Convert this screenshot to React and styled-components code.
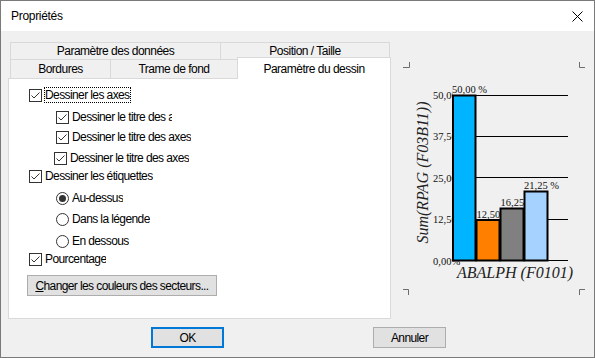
import React from 'react';
import styled, { createGlobalStyle } from 'styled-components';

const GlobalStyle = createGlobalStyle`
  html, body { margin: 0; padding: 0; background: #fff; }
  body { font-family: "Liberation Sans", Arial, sans-serif; color: #000; }
`;

const Window = styled.div`
  width: 595px;
  height: 358px;
  box-sizing: border-box;
  border: 1px solid #7a7a7a;
  background: #f0f0f0;
  display: flex;
  flex-direction: column;
  overflow: hidden;
`;

const TitleBar = styled.div`
  height: 30px;
  flex: none;
  background: #fff;
  display: flex;
  align-items: center;
  justify-content: space-between;
  padding: 0 11px 0 10px;
  font-size: 12px;
  letter-spacing: -0.3px;
`;

const Body = styled.div`
  flex: 1;
  display: flex;
  flex-direction: column;
  padding: 11px 0 0 7px;
`;

const Main = styled.div`
  display: flex;
  align-items: flex-start;
`;

const TabControl = styled.div`
  width: 383px;
  display: flex;
  flex-direction: column;
`;

const TabRow = styled.div`
  display: flex;
  align-items: flex-end;
  padding-left: 2px;
  height: ${p => p.$h}px;
`;

const Tab = styled.div`
  box-sizing: border-box;
  width: ${p => p.$w}px;
  height: ${p => (p.$active ? p.$h + 3 : p.$h)}px;
  margin-top: ${p => (p.$active ? -2 : 0)}px;
  margin-bottom: ${p => (p.$active ? -1 : 0)}px;
  position: ${p => (p.$active ? 'relative' : 'static')};
  z-index: ${p => (p.$active ? 1 : 'auto')};
  background: ${p => (p.$active ? '#fff' : '#f0f0f0')};
  border-top: 1px solid #d9d9d9;
  border-left: 1px solid #d9d9d9;
  border-right: ${p => (p.$last ? '1px solid #d9d9d9' : 'none')};
  display: flex;
  align-items: center;
  justify-content: center;
  font-size: 12px;
  letter-spacing: -0.5px;
  white-space: nowrap;
`;

const Panel = styled.div`
  box-sizing: border-box;
  height: 241px;
  background: #fff;
  border: 1px solid #d9d9d9;
  padding: 0 0 0 20px;
  display: flex;
  flex-direction: column;
`;

const Row = styled.div`
  height: 16px;
  margin-top: ${p => p.$gap}px;
  margin-left: ${p => p.$indent || 0}px;
  display: flex;
  align-items: center;
`;

const Box = styled.span`
  box-sizing: border-box;
  width: 13px;
  height: 13px;
  flex: none;
  border: 1px solid #333;
  background: #fff;
  display: flex;
  align-items: center;
  justify-content: center;
`;

const RadioBox = styled(Box)`
  border-radius: 50%;
  &::after {
    content: '';
    display: ${p => (p.$on ? 'block' : 'none')};
    width: 7px;
    height: 7px;
    border-radius: 50%;
    background: #333;
  }
`;

const Label = styled.span`
  margin-left: ${p => (p.$focus ? 2 : 3)}px;
  font-size: 12px;
  letter-spacing: -0.6px;
  white-space: nowrap;
  overflow: hidden;
  line-height: 14px;
  box-sizing: border-box;
  border: ${p => (p.$focus ? '1px dotted #000' : 'none')};
  ${p => p.$clip && `width: ${p.$clip}px;`}
`;

const PushButton = styled.button`
  box-sizing: border-box;
  width: ${p => p.$w}px;
  height: 21px;
  margin-top: ${p => p.$gap || 0}px;
  margin-left: ${p => p.$left || 0}px;
  background: #e1e1e1;
  border: ${p => (p.$default ? '2px solid #0078d7' : '1px solid #adadad')};
  padding: 0;
  font-family: "Liberation Sans", Arial, sans-serif;
  font-size: 12px;
  letter-spacing: -0.6px;
  color: #000;
  display: flex;
  align-items: center;
  justify-content: center;
`;

const Footer = styled.div`
  display: flex;
  margin-top: 8px;
`;

const ChartPane = styled.svg`
  flex: none;
  margin: 14px 0 0 7px;
  width: 192px;
  height: 242px;
`;

function Check() {
  return (
    <svg width="11" height="11" viewBox="0 0 11 11">
      <path d="M1.5 5.5 L4 8 L9.5 2.5" fill="none" stroke="#333" strokeWidth="1" />
    </svg>
  );
}

function CheckRow({ gap, indent, children, focus, clip }) {
  return (
    <Row $gap={gap} $indent={indent}>
      <Box><Check /></Box>
      <Label $focus={focus} $clip={clip}>{children}</Label>
    </Row>
  );
}

function RadioRow({ gap, on, children }) {
  return (
    <Row $gap={gap} $indent={27}>
      <RadioBox $on={on} />
      <Label>{children}</Label>
    </Row>
  );
}

const bars = [
  { x: 453, w: 22.5, top: 95.5, fill: '#00b4ff' },
  { x: 476.5, w: 23, top: 220, fill: '#ff8000' },
  { x: 500.5, w: 23, top: 208.5, fill: '#808080' },
  { x: 524.5, w: 23, top: 191.5, fill: '#a6d2ff' },
];

const ticks = [
  { y: 95.5, t: '50,00%' },
  { y: 136.5, t: '37,50%' },
  { y: 178, t: '25,00%' },
  { y: 219.5, t: '12,50%' },
];

function Chart() {
  const serif = '"Liberation Serif", "Times New Roman", serif';
  return (
    <ChartPane viewBox="398 56 192 242">
      <defs>
        <clipPath id="lab">
          <rect x="398" y="56" width="54.5" height="242" />
        </clipPath>
      </defs>
      <g fill="none" stroke="#6d6d6d" strokeWidth="1">
        <path d="M403 67.5 H409.5 V62" />
        <path d="M579.5 62 V67.5 H585" />
        <path d="M403 289.5 H408.5 V295" />
        <path d="M579.5 295 V289.5 H585" />
      </g>
      <g fontFamily={serif} fontSize="10.5" fill="#111" clipPath="url(#lab)">
        {ticks.map(k => (
          <text key={k.t} x="433" y={k.y + 3.5}>{k.t}</text>
        ))}
      </g>
      <text x="433" y="265" fontFamily={serif} fontSize="10.5" fill="#111">0,00%</text>
      <g stroke="#000" strokeWidth="1">
        {[95.5, 136.5, 177.5, 219.5].map(y => (
          <line key={y} x1="452.5" x2="568" y1={y} y2={y} />
        ))}
        <line x1="452.5" x2="568" y1="260.5" y2="260.5" />
        <line x1="452.5" x2="452.5" y1="95" y2="261" />
      </g>
      {bars.map(b => (
        <rect key={b.x} x={b.x} y={b.top} width={b.w} height={260.5 - b.top}
          fill={b.fill} stroke="#000" strokeWidth="2" />
      ))}
      <g fontFamily={serif} fontSize="10.5" fill="#111">
        <text x="452" y="93">50,00 %</text>
        <text x="476.5" y="217.5">12,50</text>
        <text x="500.5" y="206">16,25</text>
        <text x="524" y="189">21,25 %</text>
      </g>
      <text x="427.5" y="172.5" transform="rotate(-90 427.5 172.5)" textAnchor="middle"
        fontFamily={serif} fontStyle="italic" fontSize="16" fill="#222">Sum(RPAG (F03B11))</text>
      <text x="457" y="278" fontFamily={serif} fontStyle="italic" fontSize="16" fill="#222">ABALPH (F0101)</text>
    </ChartPane>
  );
}

export default function App() {
  return (
    <>
      <GlobalStyle />
      <Window>
        <TitleBar>
          <span>Propriétés</span>
          <svg width="11" height="11" viewBox="0 0 11 11">
            <path d="M0.5 0.5 L10.5 10.5 M10.5 0.5 L0.5 10.5" stroke="#000" strokeWidth="1" />
          </svg>
        </TitleBar>
        <Body>
          <Main>
            <TabControl>
              <TabRow $h={17}>
                <Tab $w={210} $h={17}>Paramètre des données</Tab>
                <Tab $w={170} $h={17} $last>Position / Taille</Tab>
              </TabRow>
              <TabRow $h={19}>
                <Tab $w={100} $h={19}>Bordures</Tab>
                <Tab $w={127} $h={19}>Trame de fond</Tab>
                <Tab $w={154} $h={19} $active $last>Paramètre du dessin</Tab>
              </TabRow>
              <Panel>
                <CheckRow gap={8} focus>Dessiner les axes</CheckRow>
                <CheckRow gap={6} indent={27} clip={100}>Dessiner le titre des axes</CheckRow>
                <CheckRow gap={4} indent={27}>Dessiner le titre des axes</CheckRow>
                <CheckRow gap={5} indent={25}>Dessiner le titre des axes</CheckRow>
                <CheckRow gap={2}>Dessiner les étiquettes</CheckRow>
                <RadioRow gap={6} on>Au-dessus</RadioRow>
                <RadioRow gap={5}>Dans la légende</RadioRow>
                <RadioRow gap={6}>En dessous</RadioRow>
                <CheckRow gap={2}>Pourcentage</CheckRow>
                <PushButton $w={190} $gap={8} $left={-2}>
                  <span><u>C</u>hanger les couleurs des secteurs...</span>
                </PushButton>
              </Panel>
            </TabControl>
            <Chart />
          </Main>
          <Footer>
            <PushButton $w={73} $left={143} $default>OK</PushButton>
            <PushButton $w={73} $left={149}>Annuler</PushButton>
          </Footer>
        </Body>
      </Window>
    </>
  );
}
